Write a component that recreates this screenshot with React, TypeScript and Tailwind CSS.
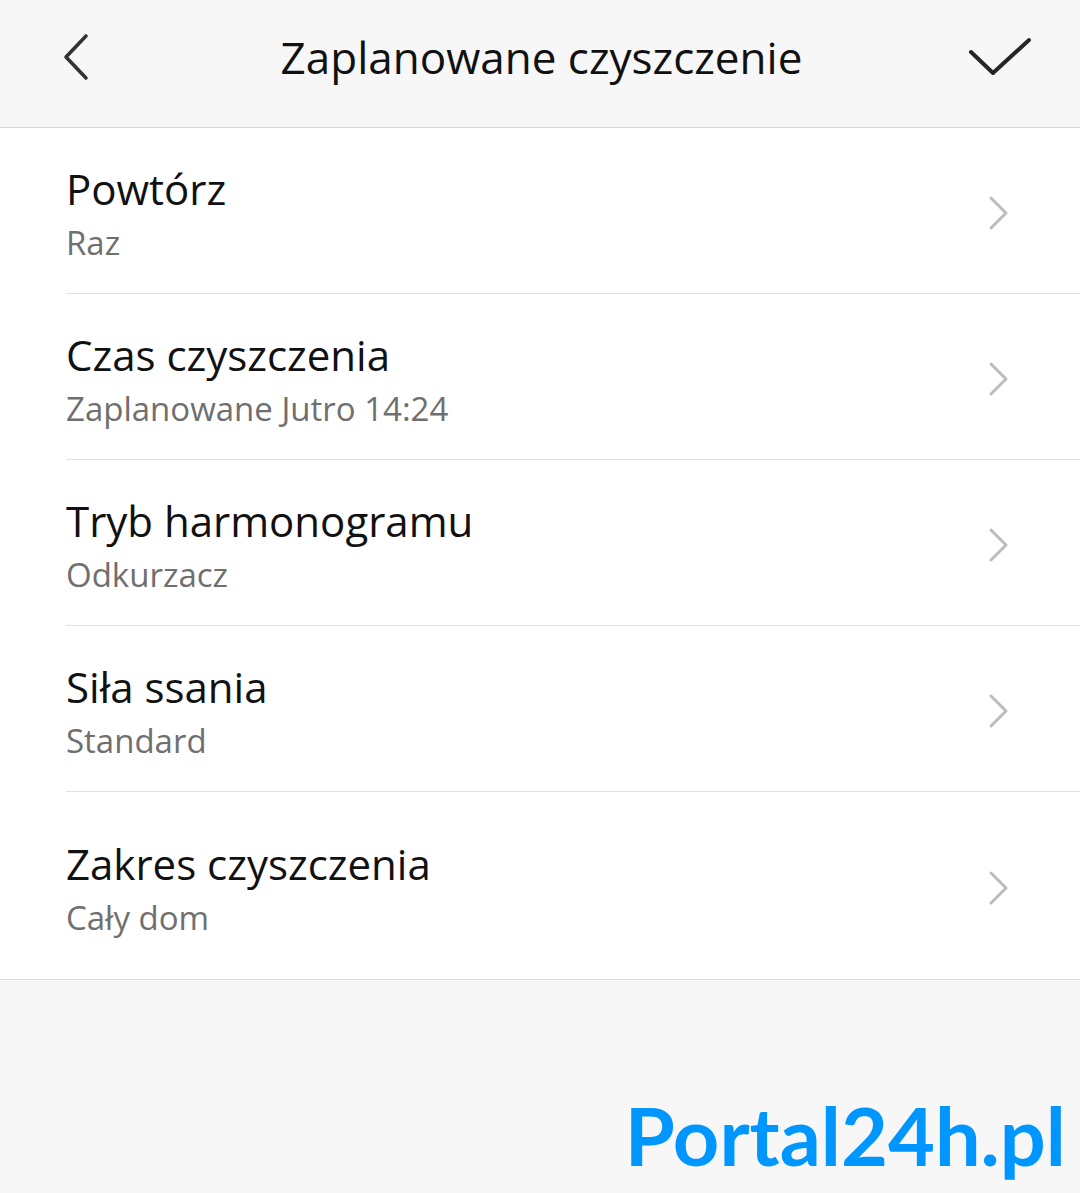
const rows = [
  { title: "Powtórz", value: "Raz" },
  { title: "Czas czyszczenia", value: "Zaplanowane Jutro 14:24" },
  { title: "Tryb harmonogramu", value: "Odkurzacz" },
  { title: "Siła ssania", value: "Standard" },
  { title: "Zakres czyszczenia", value: "Cały dom" },
];

function BackIcon() {
  return (
    <svg width="28" height="48" viewBox="0 0 28 48" className="text-[#333]">
      <polyline points="23,3 3,24 23,45" fill="none" stroke="currentColor" strokeWidth="3.6" strokeLinecap="round" strokeLinejoin="round" />
    </svg>
  );
}

function CheckIcon() {
  return (
    <svg width="64" height="42" viewBox="0 0 64 42" className="text-[#262626]">
      <polyline points="3,15 25,36 61,3" fill="none" stroke="currentColor" strokeWidth="4" strokeLinecap="round" strokeLinejoin="round" />
    </svg>
  );
}

function RowChevron() {
  return (
    <svg width="22" height="36" viewBox="0 0 22 36" className="text-[#bcbcbc]">
      <polyline points="3,3 18,18 3,33" fill="none" stroke="currentColor" strokeWidth="3" strokeLinecap="round" strokeLinejoin="round" />
    </svg>
  );
}

export default function App() {
  return (
    <div className="w-[1080px] h-[1193px] bg-[#f7f7f7] flex flex-col" style={{ fontFamily: '"Open Sans", sans-serif' }}>
      {/* header */}
      <div className="h-[128px] flex items-start justify-between pl-[63px] pr-[48px] pt-[33px] border-b border-[#d9d9d9]">
        <BackIcon />
        <h1 className="text-[44px] leading-[50px] text-[#111] -mt-[1px] pl-[24px]">Zaplanowane czyszczenie</h1>
        <div className="pt-[4px]">
          <CheckIcon />
        </div>
      </div>

      {/* list */}
      <div className="bg-white border-b border-[#dcdcdc]">
        {rows.map((r, i) => (
          <div key={r.title} className={"pl-[66px] " + (i === rows.length - 1 ? "h-[187px]" : "h-[166px]")}>
            <div className={"h-full flex items-center pr-[70px] " + (i === rows.length - 1 ? "" : "border-b border-[#e0e0e0]")}>
              <div className="flex-1 flex flex-col pt-[6px]">
                <span className="text-[42px] leading-[54px] text-[#111]">{r.title}</span>
                <span className="text-[33px] leading-[46px] text-[#6f6f6f] mt-[4px]">{r.value}</span>
              </div>
              <div className="pt-[4px]">
                <RowChevron />
              </div>
            </div>
          </div>
        ))}
      </div>

      <div className="flex-1 flex items-end justify-end pr-[14px] -mb-[2px]">
        <span className="text-[81px] font-bold text-[#0096ff]" style={{ fontFamily: "Lato, sans-serif" }}>
          Portal24h.pl
        </span>
      </div>
    </div>
  );
}
